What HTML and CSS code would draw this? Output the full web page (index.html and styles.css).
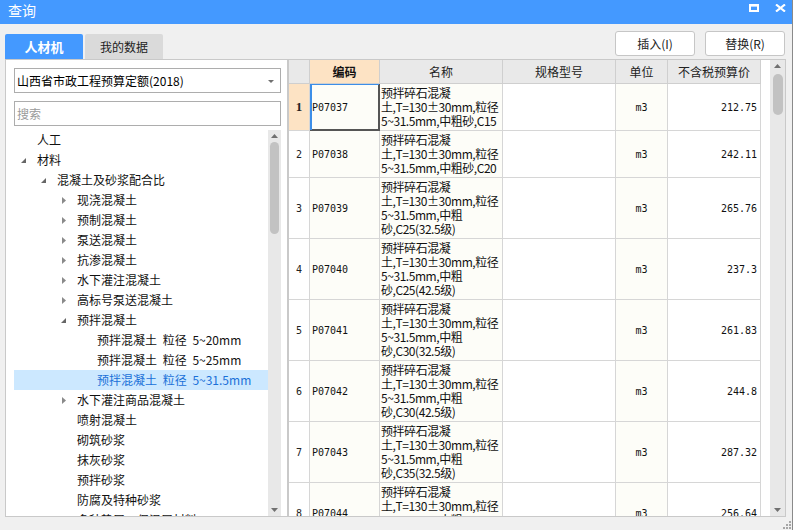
FILE: index.html
```html
<!DOCTYPE html>
<html lang="zh-CN">
<head>
<meta charset="utf-8">
<title>查询</title>
<link rel="stylesheet" href="styles.css">
</head>
<body>
<div class="desk">
  <div class="win">
    <div class="titlebar">
      <span class="title">查询</span>
      <div class="wctrl">
        <svg width="10" height="8" viewBox="0 0 10 8"><rect x="1" y="1.25" width="8" height="5.75" fill="none" stroke="#fff" stroke-width="2"/><rect x="0" y="0" width="10" height="2.5" fill="#fff"/></svg>
        <svg width="11" height="8" viewBox="0 0 11 8"><path d="M1 0.5 L10 7.5 M10 0.5 L1 7.5" stroke="#fff" stroke-width="2.2" fill="none"/></svg>
      </div>
    </div>

    <div class="toolbar">
      <div class="tabs">
        <div class="tab active">人材机</div>
        <div class="tab">我的数据</div>
      </div>
      <div class="actions">
        <button class="btn">插入(I)</button>
        <button class="btn">替换(R)</button>
      </div>
    </div>

    <div class="main">
      <div class="leftpane">
        <div class="select"><span>山西省市政工程预算定额(2018)</span><svg class="caret" width="6" height="3" viewBox="0 0 6 3"><polygon points="0,0 6,0 3,3" fill="#707070"/></svg></div>
        <div class="search">搜索</div>
        <div class="treebox">
          <ul class="tree">
            <li class="node l0"><span class="tw"></span>人工</li>
            <li class="node l0"><span class="tw"><svg class="exp" width="5" height="5" viewBox="0 0 5 5"><polygon points="5,0 5,5 0,5"/></svg></span>材料</li>
            <li class="node l1"><span class="tw"><svg class="exp" width="5" height="5" viewBox="0 0 5 5"><polygon points="5,0 5,5 0,5"/></svg></span>混凝土及砂浆配合比</li>
            <li class="node l2"><span class="tw"><svg class="col" width="4" height="7" viewBox="0 0 4 7"><polygon points="0,0 4,3.5 0,7"/></svg></span>现浇混凝土</li>
            <li class="node l2"><span class="tw"><svg class="col" width="4" height="7" viewBox="0 0 4 7"><polygon points="0,0 4,3.5 0,7"/></svg></span>预制混凝土</li>
            <li class="node l2"><span class="tw"><svg class="col" width="4" height="7" viewBox="0 0 4 7"><polygon points="0,0 4,3.5 0,7"/></svg></span>泵送混凝土</li>
            <li class="node l2"><span class="tw"><svg class="col" width="4" height="7" viewBox="0 0 4 7"><polygon points="0,0 4,3.5 0,7"/></svg></span>抗渗混凝土</li>
            <li class="node l2"><span class="tw"><svg class="col" width="4" height="7" viewBox="0 0 4 7"><polygon points="0,0 4,3.5 0,7"/></svg></span>水下灌注混凝土</li>
            <li class="node l2"><span class="tw"><svg class="col" width="4" height="7" viewBox="0 0 4 7"><polygon points="0,0 4,3.5 0,7"/></svg></span>高标号泵送混凝土</li>
            <li class="node l2"><span class="tw"><svg class="exp" width="5" height="5" viewBox="0 0 5 5"><polygon points="5,0 5,5 0,5"/></svg></span>预拌混凝土</li>
            <li class="node l3"><span class="tw"></span>预拌混凝土 粒径 5~20mm</li>
            <li class="node l3"><span class="tw"></span>预拌混凝土 粒径 5~25mm</li>
            <li class="node l3 selected"><span class="tw"></span>预拌混凝土 粒径 5~31.5mm</li>
            <li class="node l2"><span class="tw"><svg class="col" width="4" height="7" viewBox="0 0 4 7"><polygon points="0,0 4,3.5 0,7"/></svg></span>水下灌注商品混凝土</li>
            <li class="node l2"><span class="tw"></span>喷射混凝土</li>
            <li class="node l2"><span class="tw"></span>砌筑砂浆</li>
            <li class="node l2"><span class="tw"></span>抹灰砂浆</li>
            <li class="node l2"><span class="tw"></span>预拌砂浆</li>
            <li class="node l2"><span class="tw"></span>防腐及特种砂浆</li>
            <li class="node l2"><span class="tw"></span>多种垫层、保温层材料</li>
          </ul>
          <div class="vscroll narrow">
            <div class="arrow"><svg width="7" height="4" viewBox="0 0 7 4"><polygon points="0,4 3.5,0 7,4" fill="#707070"/></svg></div>
            <div class="thumb tree-thumb"></div>
            <div class="spacer"></div>
            <div class="arrow"><svg width="7" height="4" viewBox="0 0 7 4"><polygon points="0,0 7,0 3.5,4" fill="#707070"/></svg></div>
          </div>
        </div>
      </div>

      <div class="rightpane">
        <div class="grid">
          <div class="gr ghead">
            <div></div>
            <div class="hl">编码</div>
            <div>名称</div>
            <div>规格型号</div>
            <div>单位</div>
            <div>不含税预算价</div>
          </div>
          <div class="gr grow">
            <div class="rn cur">1</div>
            <div class="code cream sel">P07037</div>
            <div class="name cream">预拌碎石混凝<br>土,T=130±30mm,粒径<br>5~31.5mm,中粗砂,C15</div>
            <div></div>
            <div class="unit cream">m3</div>
            <div class="price">212.75</div>
          </div>
          <div class="gr grow">
            <div class="rn">2</div>
            <div class="code cream">P07038</div>
            <div class="name cream">预拌碎石混凝<br>土,T=130±30mm,粒径<br>5~31.5mm,中粗砂,C20</div>
            <div></div>
            <div class="unit cream">m3</div>
            <div class="price">242.11</div>
          </div>
          <div class="gr grow">
            <div class="rn">3</div>
            <div class="code cream">P07039</div>
            <div class="name cream">预拌碎石混凝<br>土,T=130±30mm,粒径<br>5~31.5mm,中粗<br>砂,C25(32.5级)</div>
            <div></div>
            <div class="unit cream">m3</div>
            <div class="price">265.76</div>
          </div>
          <div class="gr grow">
            <div class="rn">4</div>
            <div class="code cream">P07040</div>
            <div class="name cream">预拌碎石混凝<br>土,T=130±30mm,粒径<br>5~31.5mm,中粗<br>砂,C25(42.5级)</div>
            <div></div>
            <div class="unit cream">m3</div>
            <div class="price">237.3</div>
          </div>
          <div class="gr grow">
            <div class="rn">5</div>
            <div class="code cream">P07041</div>
            <div class="name cream">预拌碎石混凝<br>土,T=130±30mm,粒径<br>5~31.5mm,中粗<br>砂,C30(32.5级)</div>
            <div></div>
            <div class="unit cream">m3</div>
            <div class="price">261.83</div>
          </div>
          <div class="gr grow">
            <div class="rn">6</div>
            <div class="code cream">P07042</div>
            <div class="name cream">预拌碎石混凝<br>土,T=130±30mm,粒径<br>5~31.5mm,中粗<br>砂,C30(42.5级)</div>
            <div></div>
            <div class="unit cream">m3</div>
            <div class="price">244.8</div>
          </div>
          <div class="gr grow">
            <div class="rn">7</div>
            <div class="code cream">P07043</div>
            <div class="name cream">预拌碎石混凝<br>土,T=130±30mm,粒径<br>5~31.5mm,中粗<br>砂,C35(32.5级)</div>
            <div></div>
            <div class="unit cream">m3</div>
            <div class="price">287.32</div>
          </div>
          <div class="gr grow">
            <div class="rn">8</div>
            <div class="code cream">P07044</div>
            <div class="name cream">预拌碎石混凝<br>土,T=130±30mm,粒径<br>5~31.5mm,中粗<br>砂,C35(42.5级)</div>
            <div></div>
            <div class="unit cream">m3</div>
            <div class="price">256.64</div>
          </div>
        </div>
        <div class="gridgap"></div>
        <div class="vscroll wide">
          <div class="arrow"><svg width="7" height="4" viewBox="0 0 7 4"><polygon points="0,4 3.5,0 7,4" fill="#707070"/></svg></div>
          <div class="thumb grid-thumb"></div>
          <div class="spacer"></div>
          <div class="arrow"><svg width="7" height="4" viewBox="0 0 7 4"><polygon points="0,0 7,0 3.5,4" fill="#707070"/></svg></div>
        </div>
      </div>
    </div>

    <div class="statusbar">
      <svg width="9" height="9" viewBox="0 0 9 9" fill="#a6a6a6"><rect x="7" y="1" width="2" height="2"/><rect x="4" y="4" width="2" height="2"/><rect x="7" y="4" width="2" height="2"/><rect x="1" y="7" width="2" height="2"/><rect x="4" y="7" width="2" height="2"/><rect x="7" y="7" width="2" height="2"/></svg>
    </div>
  </div>
  <div class="behind"></div>
</div>
</body>
</html>
```

FILE: styles.css
```css
html, body {
  margin: 0;
  padding: 0;
}
body {
  width: 798px;
  height: 530px;
  overflow: hidden;
  font-family: "Noto Sans CJK SC", sans-serif;
  font-size: 12px;
  color: #111;
}
.desk {
  display: flex;
  height: 530px;
}
.win {
  width: 792px;
  display: flex;
  flex-direction: column;
  background: #f0f0f0;
}
.behind {
  flex: 1;
  background: #fff;
  border-left: 1px solid #8a8a8a;
}

/* title bar */
.titlebar {
  height: 24px;
  background: #4499ff;
  color: #fff;
  display: flex;
  justify-content: space-between;
  align-items: flex-start;
}
.title {
  padding-left: 8px;
  font-size: 14px;
  line-height: 20px;
}
.wctrl {
  display: flex;
  gap: 16px;
  margin: 4px 6px 0 0;
}
.wctrl svg {
  display: block;
}

/* toolbar */
.toolbar {
  height: 36px;
  display: flex;
  justify-content: space-between;
}
.tabs {
  display: flex;
  gap: 2px;
  padding-left: 5px;
  align-self: flex-end;
}
.tab {
  width: 78px;
  height: 25px;
  display: flex;
  align-items: center;
  justify-content: center;
  background: #dadada;
  border-radius: 2px 2px 0 0;
  color: #222;
  font-size: 12px;
}
.tab.active {
  background: #4499ff;
  color: #fff;
  font-weight: bold;
  font-size: 13px;
}
.actions {
  display: flex;
  gap: 10px;
  padding: 7px 7px 0 0;
}
.btn {
  width: 80px;
  height: 25px;
  padding: 0;
  border: 1px solid #c6c6c6;
  border-radius: 3px;
  background: #fff;
  color: #222;
  font-family: "Noto Sans CJK SC", sans-serif;
  font-size: 12px;
}

/* main area */
.main {
  height: 458px;
  display: flex;
  padding: 0 6px 0 5px;
}
.leftpane {
  width: 283px;
  box-sizing: border-box;
  border: 1px solid #c9c9c9;
  background: #fff;
  padding: 8px 6px 0 8px;
  display: flex;
  flex-direction: column;
}
.select {
  height: 25px;
  box-sizing: border-box;
  border: 1px solid #adadad;
  display: flex;
  align-items: center;
  justify-content: space-between;
  padding: 0 6px 0 2px;
  font-size: 12px;
  color: #000;
}
.caret {
  display: block;
  margin-top: 1px;
}
.search {
  margin-top: 8px;
  height: 25px;
  box-sizing: border-box;
  border: 1px solid #adadad;
  display: flex;
  align-items: center;
  padding-left: 2px;
  color: #9a9a9a;
}
.treebox {
  margin-top: 4px;
  flex: 1;
  display: flex;
  overflow: hidden;
}
.tree {
  list-style: none;
  margin: 0;
  padding: 0;
  width: 254px;
  overflow: hidden;
}
.node {
  height: 20px;
  line-height: 20px;
  display: flex;
  align-items: center;
  white-space: nowrap;
  word-spacing: 3px;
  color: #111;
}
.l0 { padding-left: 7px; }
.l1 { padding-left: 27px; }
.l2 { padding-left: 47px; }
.l3 { padding-left: 67px; }
.tw {
  width: 16px;
  height: 20px;
  flex: none;
  display: flex;
  align-items: center;
  padding-top: 1px;
  box-sizing: border-box;
}
.tw svg { display: block; }
.tw .exp { fill: #666; }
.tw .col { fill: #8a8a8a; margin-left: 1px; }
.node.selected {
  background: #cce8ff;
  color: #1a70d8;
}

/* scrollbars */
.vscroll {
  flex: none;
  background: #e8e8e8;
  display: flex;
  flex-direction: column;
  align-items: center;
}
.vscroll.narrow { width: 13px; }
.vscroll.wide { width: 15px; }
.arrow {
  height: 12px;
  display: flex;
  align-items: center;
  justify-content: center;
}
.arrow svg { display: block; }
.thumb {
  background: #c2c2c2;
  border-radius: 5px;
}
.tree-thumb {
  width: 9px;
  height: 92px;
}
.grid-thumb {
  width: 10px;
  height: 41px;
  margin-top: 2px;
}
.spacer { flex: 1; }

/* grid */
.rightpane {
  width: 498px;
  box-sizing: border-box;
  border: 1px solid #c9c9c9;
  background: #fff;
  display: flex;
  overflow: hidden;
}
.grid {
  width: 472px;
  flex: none;
  overflow: hidden;
}
.gridgap { flex: 1; }
.gr {
  display: grid;
  grid-template-columns: 21px 70px 123px 113px 52px 93px;
}
.gr > div {
  box-sizing: border-box;
  border-right: 1px solid #d6d6d6;
  border-bottom: 1px solid #d6d6d6;
  overflow: hidden;
  white-space: nowrap;
}
.ghead {
  height: 24px;
  background: #e9e9e9;
}
.ghead > div {
  display: flex;
  align-items: center;
  justify-content: center;
  color: #222;
  border-color: #cfcfcf;
}
.ghead > .hl {
  background: #fde3c4;
  font-weight: bold;
  color: #111;
}
.grow > div {
  display: flex;
  align-items: center;
}
.cream { background: #fdfdf8; }
.rn {
  justify-content: center;
  font-family: "DejaVu Sans Mono", monospace;
  font-size: 10px;
  color: #222;
}
.rn.cur {
  background: #fde3c4;
  font-weight: bold;
  font-family: "Liberation Serif", serif;
  font-size: 13px;
}
.code {
  padding-left: 2px;
  font-family: "DejaVu Sans Mono", monospace;
  font-size: 10px;
  color: #111;
}
.sel {
  box-shadow: inset 2px 1px 0 #3c8ee8, inset -1px -1px 0 #555;
  border-right-color: #555 !important;
  border-bottom-color: #555 !important;
}
.grow > .name {
  display: block;
  line-height: 14px;
  padding: 2px 0 2px 1px;
  font-size: 12px;
  letter-spacing: -0.45px;
  color: #111;
}
.unit {
  justify-content: center;
  font-family: "DejaVu Sans Mono", monospace;
  font-size: 10px;
}
.price {
  justify-content: flex-end;
  padding-right: 3px;
  font-family: "DejaVu Sans Mono", monospace;
  font-size: 10px;
}

/* status */
.statusbar {
  height: 12px;
  display: flex;
  justify-content: flex-end;
  align-items: flex-end;
  padding: 0 1px 1px 0;
}
.statusbar svg { display: block; }
```
